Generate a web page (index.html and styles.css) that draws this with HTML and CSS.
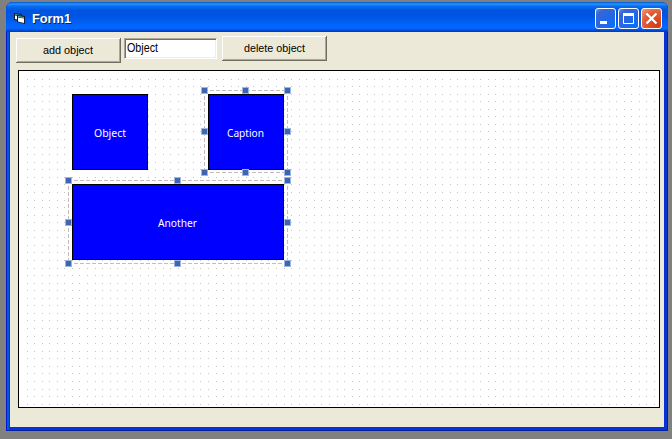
FILE: index.html
```html
<!DOCTYPE html>
<html lang="en">
<head>
<meta charset="utf-8">
<title>Form1</title>
<link rel="stylesheet" href="styles.css">
</head>
<body>
<main class="window">
  <header class="titlebar">
    <svg class="app-icon" width="13" height="13" viewBox="0 0 13 13">
      <path d="M0 1l8 1v8l-8-2z" fill="#0c1c30"/>
      <path d="M1 3.500l6 1v4l-6-1.500z" fill="#fff"/>
      <path d="M1 2.500l6 1" stroke="#38a0b0"/>
      <path d="M3 3l8 1v8l-8-2z" fill="#0c1c30"/>
      <path d="M4 5.500l6 1v4.500l-6-1.500z" fill="#fff"/>
      <path d="M4 4.500l6 1" stroke="#58b8c0"/>
    </svg>
    <h1 class="title"><svg class="line" width="42" height="18"><text x="0" y="14" textLength="39" lengthAdjust="spacingAndGlyphs">Form1</text></svg></h1>
    <div class="controls">
      <button class="control" aria-label="Minimize"><svg width="19" height="19"><path d="M4 13.500h7" stroke="#fff" stroke-width="3"/></svg></button>
      <button class="control" aria-label="Maximize"><svg width="19" height="19"><path d="M4.500 5v9.500h10V5" fill="none" stroke="#fff"/><path d="M4 5.500h11" stroke="#fff" stroke-width="3"/></svg></button>
      <button class="control close" aria-label="Close"><svg width="19" height="19"><path d="M4.500 4.500l10 10M14.500 4.500l-10 10" stroke="#fff" stroke-width="2.200"/></svg></button>
    </div>
  </header>
  <section class="client">
    <div class="toolbar">
      <button class="button add"><svg class="line" width="51" height="16"><text x="0" y="11" textLength="50" lengthAdjust="spacingAndGlyphs">add object</text></svg></button>
      <div class="field"><svg class="line" width="36" height="16"><text x="0" y="12" textLength="31" lengthAdjust="spacingAndGlyphs">Object</text></svg></div>
      <button class="button delete"><svg class="line" width="62" height="16"><text x="0" y="11" textLength="61" lengthAdjust="spacingAndGlyphs">delete object</text></svg></button>
    </div>
    <div class="canvas">
      <svg class="grid" width="640" height="336" shape-rendering="crispEdges"><path id="dots"/></svg>
      <div class="shape object"><svg class="line" width="33" height="16"><text x="0" y="13" textLength="32" lengthAdjust="spacingAndGlyphs">Object</text></svg></div>
      <div class="shape caption"><svg class="line" width="38" height="16"><text x="0" y="13" textLength="37" lengthAdjust="spacingAndGlyphs">Caption</text></svg></div>
      <div class="shape another"><svg class="line" width="40" height="16"><text x="0" y="13" textLength="39" lengthAdjust="spacingAndGlyphs">Another</text></svg></div>
      <div class="selection select-caption"><i class="handle nw"></i><i class="handle n"></i><i class="handle ne"></i><i class="handle w"></i><i class="handle e"></i><i class="handle sw"></i><i class="handle s"></i><i class="handle se"></i></div>
      <div class="selection select-another"><i class="handle nw"></i><i class="handle n"></i><i class="handle ne"></i><i class="handle w"></i><i class="handle e"></i><i class="handle sw"></i><i class="handle s"></i><i class="handle se"></i></div>
    </div>
  </section>
</main>
<script src="grid.js"></script>
</body>
</html>
```
FILE: styles.css
```css
* { box-sizing: border-box; }
body { margin: 0; padding: 2px 4px 8px 6px; width: 672px; height: 439px; overflow: hidden; background: #808080; font: 11px "Liberation Sans", sans-serif; }
button { padding: 0; font: inherit; }
.window { width: 662px; height: 429px; border-radius: 7px 7px 0 0; background: #0831d9; padding: 0 4px 4px; box-shadow: inset 1px 0 #0019cf, inset -1px -1px #001ea0, inset 3px 0 #0855dd, inset -2px -2px #0736ca; overflow: hidden; }
.titlebar { height: 30px; margin: 0 -4px; padding: 2px 7px 0; display: flex; align-items: center; background: linear-gradient(#0058c8 0, #2b90ff 7%, #0872f5 13%, #0054df 27%, #0055e5 50%, #0064fb 75%, #0068ff 88%, #0043cf 96%, #0038bd 100%); }
.app-icon { display: block; margin-left: 1px; }
.title { margin: 0 0 0 5px; font-size: 13px; line-height: 18px; text-shadow: 1px 1px #08246b; color: #fff; }
.line { display: block; overflow: visible; fill: currentColor; }
.controls { margin-left: auto; margin-right: -1px; display: flex; gap: 2px; }
.control { width: 21px; height: 21px; border: 1px solid #fff; border-radius: 3px; background: radial-gradient(circle at 85% 90%, #0671f5, #2865e5 50%, #3768d4 80%, #6c97ef); }
.control svg { display: block; }
.close { background: radial-gradient(circle at 80% 85%, #d63b0d, #e25a36 60%, #ee9c83); }
.client { width: 654px; height: 395px; padding: 4px 4px 0 6px; background: #ece9d8; }
.toolbar { display: flex; align-items: flex-start; height: 34px; }
.button { width: 105px; height: 25px; display: flex; align-items: center; justify-content: center; background: #ece9d8; color: #000; border: 0; box-shadow: inset -1px -1px #716f64, inset 1px 1px #fff, inset -2px -2px #aca899; }
.add { margin-top: 2px; }
.field { width: 93px; height: 21px; margin: 2px 5px 0 3px; padding: 1px 2px; font-size: 12px; background: #fff; border: 1px solid; border-color: #aca899 #fff #fff #aca899; box-shadow: inset 1px 1px #716f64, inset -1px -1px #f1efe2; }
.canvas { position: relative; width: 642px; height: 338px; margin-left: 2px; border: 1px solid #000; background: #fff; }
.grid { display: block; fill: #c4c4c4; }
.shape { position: absolute; width: 76px; height: 76px; display: flex; align-items: center; justify-content: center; background: #00f; border: 1px solid #000; color: #fff; font-family: "Noto Sans", sans-serif; }
.object { left: 53px; top: 23px; }
.caption { left: 189px; top: 23px; }
.another { left: 53px; top: 113px; width: 212px; }
.selection { --dash: #c6bcc0 0 4px, #fff 4px 6px; position: absolute; background: repeating-linear-gradient(90deg, var(--dash)) 0 0 / 100% 1px no-repeat, repeating-linear-gradient(90deg, var(--dash)) 0 100% / 100% 1px no-repeat, repeating-linear-gradient(var(--dash)) 0 0 / 1px 100% no-repeat, repeating-linear-gradient(var(--dash)) 100% 0 / 1px 100% no-repeat; }
.select-caption { left: 185px; top: 19px; width: 84px; height: 83px; }
.select-another { left: 49px; top: 109px; width: 220px; height: 84px; }
.handle { position: absolute; width: 7px; height: 7px; background: #3e65b5; border: 1px solid #9db8dc; }
.nw, .w, .sw { left: -3px; }
.n, .s { left: calc(50% - 4px); }
.ne, .e, .se { right: -3px; }
.nw, .n, .ne { top: -3px; }
.w, .e { top: calc(50% - 3.500px); }
.sw, .s, .se { bottom: -3px; }
```
FILE: grid.js
```js
// Snap grid: one dot every 2 mm (7.56 px)
const pitch = 7.56;
let d = "";
for (let y = pitch + 0.5; y < 336; y += pitch) {
  for (let x = pitch + 0.5; x < 640; x += pitch) {
    d += `M${Math.floor(x)} ${Math.floor(y)}h1v1h-1z`;
  }
}
document.getElementById("dots").setAttribute("d", d);
```
